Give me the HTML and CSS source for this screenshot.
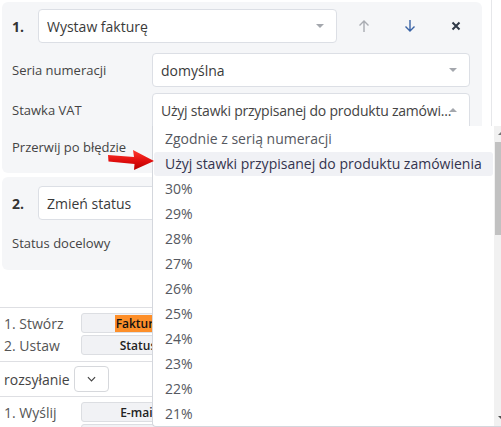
FILE: index.html
```html
<!DOCTYPE html>
<html lang="pl">
<head>
<meta charset="utf-8">
<link rel="stylesheet" href="styles.css">
</head>
<body>
<div class="page">
  <div class="main">
    <section class="panel p1">
      <div class="head">
        <span class="num">1.</span>
        <div class="select wide"><span class="val">Wystaw fakturę</span><i class="caret"></i></div>
        <div class="tools">
          <span class="tool up"><svg viewBox="0 0 14 14" width="14" height="14"><path d="M7 13V2M2.5 6.5L7 2l4.5 4.5" fill="none" stroke="#a9acb2" stroke-width="1.4"/></svg></span>
          <span class="tool down"><svg viewBox="0 0 14 14" width="14" height="14"><path d="M7 1v11M2.5 7.5L7 12l4.5-4.5" fill="none" stroke="#3b64a6" stroke-width="1.4"/></svg></span>
          <span class="tool close"><svg viewBox="0 0 14 14" width="14" height="14"><path d="M3.5 3.5l7 7M10.5 3.5l-7 7" fill="none" stroke="#2f3947" stroke-width="2"/></svg></span>
        </div>
      </div>
      <div class="row"><span class="label">Seria numeracji</span><div class="select field"><span class="val">domyślna</span><i class="caret"></i></div></div>
      <div class="row"><span class="label">Stawka VAT</span><div class="select field open"><span class="val trunc">Użyj stawki przypisanej do produktu zamówi...</span><i class="caret up"></i></div></div>
      <div class="row plain"><span class="label">Przerwij po błędzie</span></div>
    </section>
    <section class="panel p2">
      <div class="head">
        <span class="num">2.</span>
        <div class="select wide"><span class="val">Zmień status</span><i class="caret"></i></div>
      </div>
      <div class="row plain"><span class="label">Status docelowy</span></div>
    </section>
    <div class="list">
      <div class="group">
        <div class="lrow"><span class="lbl">1. Stwórz</span><span class="btn"><mark>Fakturę</mark></span></div>
        <div class="lrow"><span class="lbl">2. Ustaw</span><span class="btn">Status</span></div>
      </div>
      <div class="group mid">
        <span class="big">rozsyłanie</span>
        <span class="chev"><svg viewBox="0 0 10 6" width="9" height="6"><path d="M1 1l4 4 4-4" fill="none" stroke="#444" stroke-width="1.3"/></svg></span>
      </div>
      <div class="group">
        <div class="lrow"><span class="lbl">1. Wyślij</span><span class="btn">E-mail</span></div>
        <div class="lrow"><span class="lbl"></span><span class="btn"></span></div>
      </div>
    </div>
  </div>

  <div class="menu">
    <ul class="opts">
      <li>Zgodnie z serią numeracji</li>
      <li class="hl">Użyj stawki przypisanej do produktu zamówienia</li>
      <li>30%</li>
      <li>29%</li>
      <li>28%</li>
      <li>27%</li>
      <li>26%</li>
      <li>25%</li>
      <li>24%</li>
      <li>23%</li>
      <li>22%</li>
      <li>21%</li>
    </ul>
    <div class="sbar"><i class="sarrow top"></i><div class="thumb"></div><i class="sarrow bot"></i></div>
  </div>

  <svg class="pointer" viewBox="0 0 50 24" width="50" height="24">
    <defs>
      <linearGradient id="rg" x1="0" y1="0" x2="0" y2="1">
        <stop offset="0" stop-color="#ff3a2e"/>
        <stop offset="0.55" stop-color="#e00d0d"/>
        <stop offset="1" stop-color="#b50000"/>
      </linearGradient>
    </defs>
    <path d="M1 6 L27 8 L26 1 L47 12 L27 21 L27.5 15 L1.5 12.5 Z" fill="url(#rg)"/>
  </svg>
</div>
</body>
</html>
```

FILE: styles.css
```css
html, body {
  margin: 0;
  padding: 0;
  background: #fff;
  overflow: hidden;
}
body {
  font-family: "Open Sans", "Noto Sans", sans-serif;
  color: #333;
  width: 501px;
  height: 427px;
}
.page {
  position: relative;
  width: 501px;
  height: 427px;
  overflow: hidden;
}
.main {
  width: 491px;
  height: 427px;
  border-right: 1px solid #e6e7ea;
  padding-top: 2px;
  box-sizing: content-box;
}
.panel {
  margin-left: 2px;
  width: 480px;
  background: #f5f6f8;
  border-radius: 6px;
  padding: 7px 0 11px 10px;
  box-sizing: border-box;
}
.p2 {
  margin-top: 4px;
  padding-top: 9px;
  padding-bottom: 12px;
}
.head {
  display: flex;
  align-items: center;
  height: 34px;
}
.num {
  width: 26px;
  font-weight: 700;
  font-size: 14px;
  color: #333;
}
.select {
  display: flex;
  align-items: center;
  height: 34px;
  box-sizing: border-box;
  background: #fff;
  border: 1px solid #dcdfe5;
  border-radius: 4px;
  padding-left: 8px;
  font-size: 14px;
  color: #3a3a3a;
}
.select .val {
  flex: 1;
  min-width: 0;
  white-space: nowrap;
  overflow: hidden;
  text-overflow: ellipsis;
}
.select .val.trunc {
  overflow: visible;
  color: #444;
  letter-spacing: -0.22px;
}
.wide { width: 299px; }
.field { width: 318px; }
.open {
  border-bottom-left-radius: 0;
  border-bottom-right-radius: 0;
}
.caret {
  flex: none;
  width: 0;
  height: 0;
  margin: 0 12px 0 4px;
  border-left: 4px solid transparent;
  border-right: 4px solid transparent;
  border-top: 4px solid #a4a7ad;
}
.caret.up {
  border-top: 0;
  border-bottom: 4px solid #a4a7ad;
  margin-left: 0;
  margin-right: 12px;
}
.tools {
  display: flex;
  gap: 14px;
  margin-left: 11px;
}
.tool {
  width: 32px;
  height: 32px;
  display: flex;
  align-items: center;
  justify-content: center;
}
.row {
  display: flex;
  align-items: center;
  margin-top: 6px;
}
.p1 .head + .row { margin-top: 10px; }
.row.plain {
  height: 30px;
  margin-top: 5px;
}
.p2 .row.plain { margin-top: 8px; }
.label {
  width: 140px;
  font-size: 13px;
  color: #444;
}
.list {
  margin-top: 37px;
  border-top: 1px solid #dedfe3;
}
.group {
  padding: 5px 0 6px 4px;
  border-bottom: 1px solid #dedfe3;
  display: flex;
  flex-direction: column;
  gap: 2px;
}
.group:last-child { border-bottom: 0; }
.group.mid {
  flex-direction: row;
  align-items: center;
  gap: 4px;
  padding: 4px 0 4px 4px;
}
.lrow {
  display: flex;
  align-items: center;
  height: 20px;
}
.lbl {
  width: 77px;
  font-size: 14px;
  color: #555;
}
.btn {
  width: 114px;
  height: 20px;
  box-sizing: border-box;
  border: 1px solid #dcdee2;
  border-radius: 3px;
  background: #f1f2f5;
  font-size: 12px;
  font-weight: 600;
  color: #222;
  display: flex;
  align-items: center;
  justify-content: center;
}
.btn mark {
  background: #fd8f2a;
  color: #111;
  padding: 0 1px;
}
.big {
  font-size: 14px;
  color: #444;
}
.chev {
  width: 35px;
  height: 26px;
  box-sizing: border-box;
  border: 1px solid #d6d8dc;
  border-radius: 4px;
  background: #fff;
  display: flex;
  align-items: center;
  justify-content: center;
}
.menu {
  position: absolute;
  left: 152px;
  top: 126px;
  width: 357px;
  height: 301px;
  box-sizing: border-box;
  background: #fff;
  border-left: 1px solid #d4d7dd;
  border-bottom: 1px solid #d4d7dd;
  border-bottom-left-radius: 4px;
  display: flex;
}
.opts {
  list-style: none;
  margin: 0;
  padding: 0;
  width: 341px;
  flex: none;
}
.opts li {
  height: 25px;
  line-height: 25px;
  margin: 0 1px;
  padding-left: 11px;
  font-size: 14px;
  color: #555860;
  white-space: nowrap;
  border-radius: 3px;
}
.opts li.hl {
  background: #f0f1f5;
  color: #34344e;
  margin-top: 1px;
  height: 24px;
  line-height: 24px;
}
.sbar {
  position: relative;
  width: 15px;
  height: 100%;
  background: #f1f1f1;
}
.thumb {
  position: absolute;
  left: 1px;
  top: 16px;
  width: 13px;
  height: 93px;
  background: #c1c1c1;
}
.sarrow {
  position: absolute;
  left: 4px;
  width: 0;
  height: 0;
  border-left: 3px solid transparent;
  border-right: 3px solid transparent;
}
.sarrow.top {
  top: 6px;
  border-bottom: 3px solid #777;
}
.sarrow.bot {
  bottom: 7px;
  border-top: 3px solid #505050;
}
.pointer {
  position: absolute;
  left: 107px;
  top: 149px;
}
```
